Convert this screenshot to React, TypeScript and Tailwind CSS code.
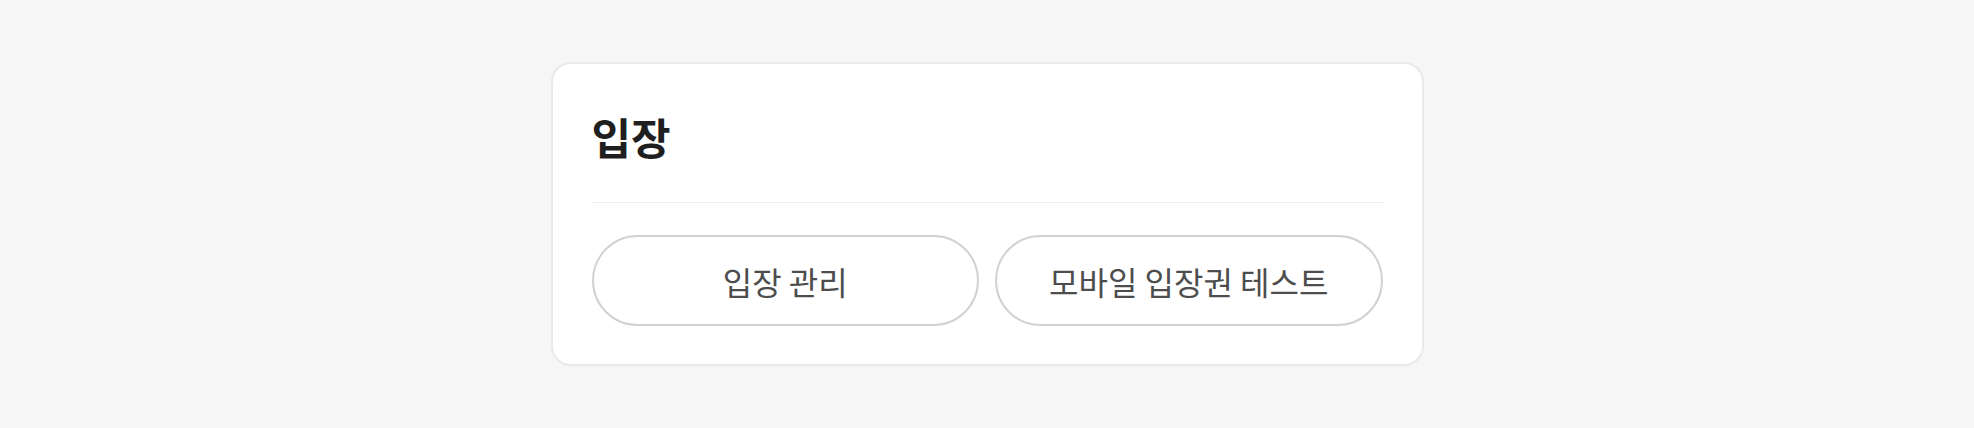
export default function App() {
  return (
    <div
      className="flex min-h-screen items-center justify-center bg-[#f6f6f6]"
      style={{ fontFamily: '"Noto Sans CJK KR", "Noto Sans", sans-serif' }}
    >
      <div className="w-[873px] rounded-[20px] border-2 border-[#e9e9e9] bg-white px-[39px] pt-[48px] pb-[38px]">
        <h1 className="text-[43px] leading-[48px] font-bold text-[#1f1f1f]">입장</h1>
        <div className="mt-[42px] h-px bg-[#ececec]" />
        <div className="mt-[32px] grid grid-cols-2 gap-[16px]">
          <button className="h-[91px] rounded-full border-2 border-[#d2d2d2] bg-white text-[32px] text-[#4d4d4d]">
            입장 관리
          </button>
          <button className="h-[91px] rounded-full border-2 border-[#d2d2d2] bg-white text-[32px] text-[#4d4d4d]">
            모바일 입장권 테스트
          </button>
        </div>
      </div>
    </div>
  )
}
